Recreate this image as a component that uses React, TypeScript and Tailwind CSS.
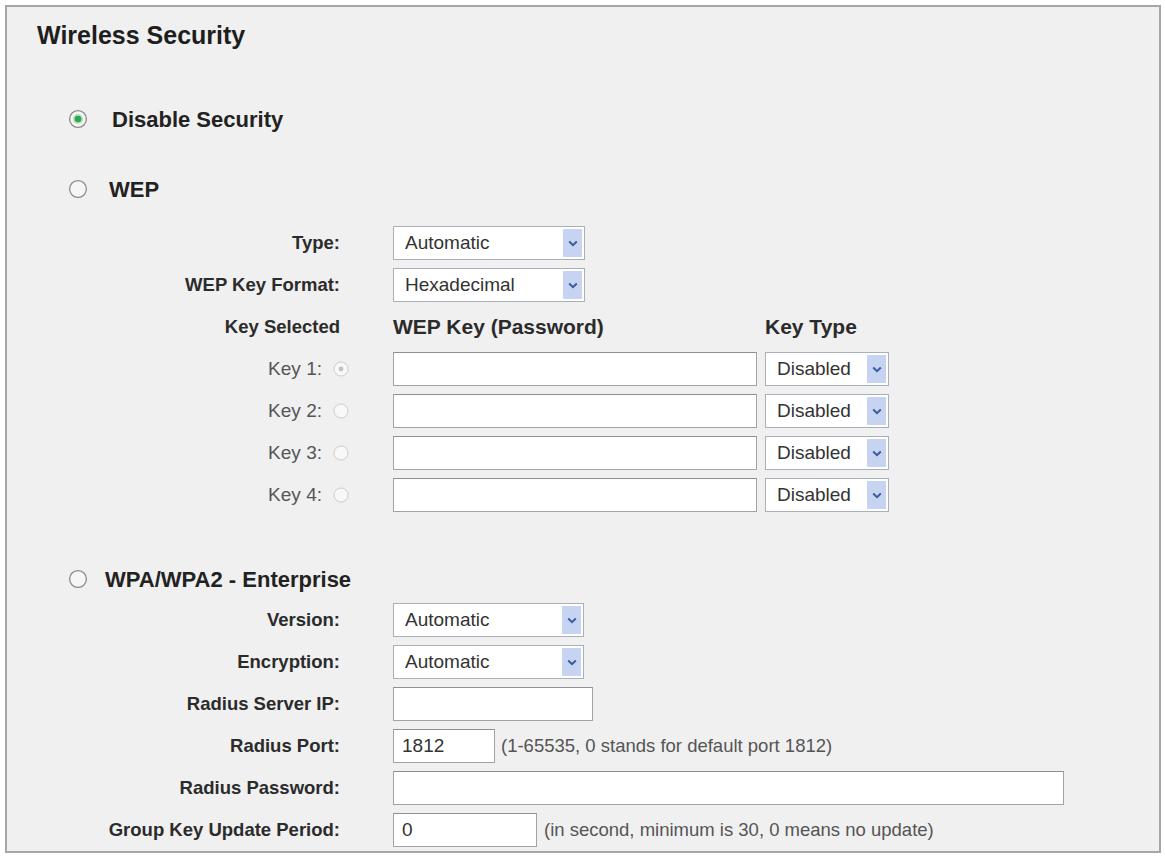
const font = "font-['Liberation_Sans',Arial,Helvetica,sans-serif]";

function Chevron() {
  return (
    <svg width="10" height="7" viewBox="0 0 10 7">
      <path d="M1.2 1.5 L5 5.2 L8.8 1.5" stroke="#3b5b9c" strokeWidth="2" fill="none" />
    </svg>
  );
}

function Select({ value, className }: { value: string; className: string }) {
  return (
    <div className={`${className} h-[34px] flex items-stretch border border-[#a9b0bc] bg-white p-[2px]`}>
      <span className="flex-1 pl-[9px] flex items-center text-[19px] text-[#333]">{value}</span>
      <span className="w-[19px] bg-[#c6d4f2] flex items-center justify-center">
        <Chevron />
      </span>
    </div>
  );
}

function Input({ value, className }: { value?: string; className: string }) {
  return (
    <div
      className={`${className} h-[34px] flex items-center border border-[#a3a3a3] border-t-[#8f8f8f] bg-white pl-[8px] text-[19px] text-[#333]`}
    >
      {value}
    </div>
  );
}

function Radio({ checked }: { checked?: boolean }) {
  return (
    <svg width="20" height="20" viewBox="0 0 20 20">
      <circle cx="10" cy="10" r="8.4" fill="#f6f6f6" stroke="#8a8a8a" strokeWidth="1.3" />
      {checked && (
        <>
          <circle cx="10" cy="10" r="5" fill="#b4e0b8" />
          <circle cx="10" cy="10" r="3.3" fill="#2ea64a" />
        </>
      )}
    </svg>
  );
}

function SmallRadio({ checked }: { checked?: boolean }) {
  return (
    <svg width="16" height="16" viewBox="0 0 16 16">
      <circle cx="8" cy="8" r="7" fill="#f8f8f8" stroke="#cdcdcd" strokeWidth="1" />
      {checked && <circle cx="8" cy="8" r="2.4" fill="#c2c2c2" />}
    </svg>
  );
}

function FieldRow({ label, children }: { label: string; children: React.ReactNode }) {
  return (
    <div className="flex items-center h-[42px]">
      <div className="w-[333px] text-right text-[18.5px] font-bold text-[#2b2b2b]">{label}</div>
      <div className="ml-[53px] flex items-center">{children}</div>
    </div>
  );
}

function KeyRow({ n, checked }: { n: number; checked?: boolean }) {
  return (
    <div className="flex items-center h-[42px]">
      <div className="w-[342px] flex items-center justify-end gap-[11px] text-[19px] text-[#555]">
        <span>Key {n}:</span>
        <SmallRadio checked={checked} />
      </div>
      <div className="ml-[44px] flex items-center gap-[8px]">
        <Input className="w-[364px]" />
        <Select value="Disabled" className="w-[124px]" />
      </div>
    </div>
  );
}

export default function App() {
  return (
    <div className={`${font} w-[1165px] h-[856px] bg-white pt-[5px] pl-[5px]`}>
      <div className="w-[1156px] h-[848px] border-2 border-[#a6a6a6] bg-[#f0f0f0] flex flex-col">
        <h1 className="pt-[14px] pl-[30px] h-[42px] text-[25px] leading-[28px] font-bold text-[#1e1e1e]">
          Wireless Security
        </h1>

        <div className="mt-[55px] h-[30px] pl-[61px] flex items-center">
          <Radio checked />
          <span className="ml-[24px] text-[22px] font-bold text-[#222]">Disable Security</span>
        </div>

        <div className="mt-[40px] h-[30px] pl-[61px] flex items-center">
          <Radio />
          <span className="ml-[21px] text-[22px] font-bold text-[#222]">WEP</span>
        </div>

        <div className="mt-[18px]">
          <FieldRow label="Type:">
            <Select value="Automatic" className="w-[192px]" />
          </FieldRow>
          <FieldRow label="WEP Key Format:">
            <Select value="Hexadecimal" className="w-[192px]" />
          </FieldRow>
          <div className="flex items-center h-[42px] text-[#2b2b2b] font-bold">
            <div className="w-[333px] text-right text-[18.5px]">Key Selected</div>
            <div className="ml-[53px] w-[372px] text-[21px]">WEP Key (Password)</div>
            <div className="text-[21px]">Key Type</div>
          </div>
          <KeyRow n={1} checked />
          <KeyRow n={2} />
          <KeyRow n={3} />
          <KeyRow n={4} />
        </div>

        <div className="mt-[48px] h-[30px] pl-[61px] flex items-center">
          <Radio />
          <span className="ml-[17px] text-[22px] font-bold text-[#222]">WPA/WPA2 - Enterprise</span>
        </div>

        <div className="mt-[5px]">
          <FieldRow label="Version:">
            <Select value="Automatic" className="w-[191px]" />
          </FieldRow>
          <FieldRow label="Encryption:">
            <Select value="Automatic" className="w-[191px]" />
          </FieldRow>
          <FieldRow label="Radius Server IP:">
            <Input className="w-[200px]" />
          </FieldRow>
          <FieldRow label="Radius Port:">
            <Input value="1812" className="w-[102px]" />
            <span className="ml-[6px] text-[18.5px] text-[#555]">(1-65535, 0 stands for default port 1812)</span>
          </FieldRow>
          <FieldRow label="Radius Password:">
            <Input className="w-[671px]" />
          </FieldRow>
          <FieldRow label="Group Key Update Period:">
            <Input value="0" className="w-[144px]" />
            <span className="ml-[7px] text-[18.5px] text-[#555]">(in second, minimum is 30, 0 means no update)</span>
          </FieldRow>
        </div>
      </div>
    </div>
  );
}
